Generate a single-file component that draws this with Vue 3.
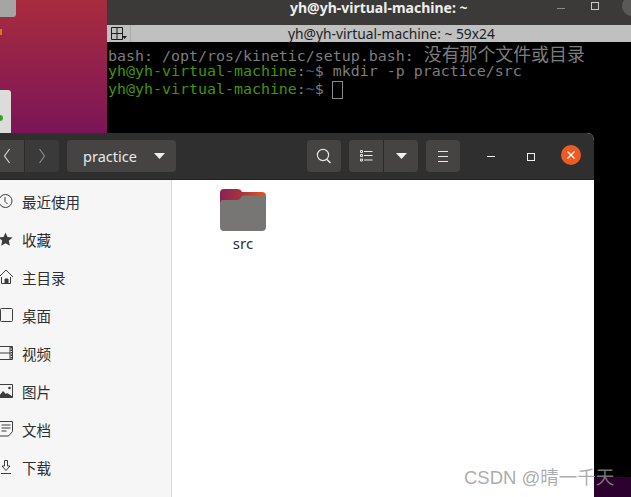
<script setup>
const places = [
  { name: '最近使用', icon: 'clock' },
  { name: '收藏', icon: 'star' },
  { name: '主目录', icon: 'home' },
  { name: '桌面', icon: 'desk' },
  { name: '视频', icon: 'film' },
  { name: '图片', icon: 'pic' },
  { name: '文档', icon: 'doc' },
  { name: '下载', icon: 'down' },
]
</script>

<template>
  <div class="desktop">
    <div class="desk-icon top"></div>
    <div class="desk-orange"></div>
    <div class="desk-icon doc-icon"><span class="green"></span></div>

    <section class="terminal">
      <header class="term-title">
        <span class="term-name">yh@yh-virtual-machine: ~</span>
        <svg class="term-ctl" width="60" height="16" viewBox="0 0 60 16">
          <path d="M6 8.5h8" stroke="#8a8a88" fill="none" />
          <rect x="40.5" y="2.5" width="7" height="7" stroke="#c8c8c6" fill="none" />
        </svg>
        <span class="term-close"></span>
      </header>
      <div class="term-bar">
        <div class="tab-btn">
          <svg width="17" height="14" viewBox="0 0 17 14">
            <path d="M.5.5h11v12H.5zM6 .5v12M.5 6.5h11" fill="none" stroke="#1c1c1c" />
            <path d="M11 9h5l-2.5 3z" fill="#1c1c1c" />
          </svg>
        </div>
        <span class="tab-label">yh@yh-virtual-machine: ~ 59x24</span>
      </div>
      <div class="term-body">
        <div class="line dim">bash: /opt/ros/kinetic/setup.bash: <span class="cjk">没有那个文件或目录</span></div>
        <div class="line"><span class="usr">yh@yh-virtual-machine</span><span class="dim">:</span><span class="path">~</span><span class="dim">$ mkdir -p practice/src</span></div>
        <div class="line"><span class="usr">yh@yh-virtual-machine</span><span class="dim">:</span><span class="path">~</span><span class="dim">$ </span><span class="cursor"></span></div>
      </div>
    </section>

    <section class="files">
      <header class="files-head">
        <div class="btn-group nav">
          <button class="btn nav-btn">
            <svg width="8" height="16" viewBox="0 0 8 16"><path d="M6.5 1 1.5 8l5 7" fill="none" stroke="#d4d4d2" stroke-width="1.2" /></svg>
          </button>
          <button class="btn nav-btn">
            <svg width="8" height="16" viewBox="0 0 8 16"><path d="M1.5 1l5 7-5 7" fill="none" stroke="#8a8a88" stroke-width="1.2" /></svg>
          </button>
        </div>
        <button class="btn path-btn">
          <span>practice</span>
          <svg width="11" height="6" viewBox="0 0 11 6"><path d="M0 0h11L5.5 6z" fill="#f0f0ee" /></svg>
        </button>
        <div class="spacer"></div>
        <button class="btn square">
          <svg width="16" height="17" viewBox="0 0 16 17"><circle cx="7" cy="7" r="5.6" fill="none" stroke="#e4e4e2" stroke-width="1.2" /><path d="M11 11.5l3.5 3.5" stroke="#e4e4e2" stroke-width="1.6" /></svg>
        </button>
        <div class="btn-group view">
          <button class="btn square">
            <svg width="13" height="12" viewBox="0 0 13 12"><path d="M.5.5h2v2h-2zM.5 4.5h2v2h-2zM.5 9h2v2h-2z" fill="none" stroke="#e8e8e6" /><path d="M4 1.5h8.5M4 5.5h8.5M4 10h8.5" stroke="#e8e8e6" fill="none" /></svg>
          </button>
          <button class="btn square">
            <svg width="11" height="6" viewBox="0 0 11 6"><path d="M0 0h11L5.5 6z" fill="#f0f0ee" /></svg>
          </button>
        </div>
        <button class="btn square">
          <svg width="12" height="11" viewBox="0 0 12 11"><path d="M1 .5h10M1 5.5h10M1 10.5h10" stroke="#e8e8e6" fill="none" /></svg>
        </button>
        <div class="win-ctl">
          <svg width="10" height="3" viewBox="0 0 10 3"><path d="M1 1.5h8" stroke="#f0f0ee" /></svg>
          <svg width="10" height="10" viewBox="0 0 10 10"><rect x="1.5" y="1.5" width="7" height="7" fill="none" stroke="#f0f0ee" /></svg>
          <span class="close">
            <svg width="8" height="8" viewBox="0 0 8 8"><path d="M.5.5l7 7M7.5.5l-7 7" stroke="#fff" stroke-width="1.2" /></svg>
          </span>
        </div>
      </header>
      <div class="files-main">
        <nav class="sidebar">
          <div v-for="p in places" :key="p.name" class="place">
            <svg class="place-icon" width="16" height="16" viewBox="0 0 16 16">
              <g v-if="p.icon === 'clock'" fill="none" stroke="#3d3d3d"><circle cx="8.5" cy="8" r="6.5" /><path d="M8 4v4.500l2.500 2.500" /></g>
              <path v-else-if="p.icon === 'star'" d="M8.500 1.500l2 4.500 5 .5-3.700 3.300 1 4.900-4.300-2.400-4.300 2.400 1-4.900L1.500 6.500l5-.5z" fill="#3d3d3d" />
              <g v-else-if="p.icon === 'home'" fill="none" stroke="#3d3d3d"><path d="M2 8l7-7 7 7M4.500 8v6.500h9V8" /><path d="M8 10h3v4.500H8z" fill="#3d3d3d" /></g>
              <rect v-else-if="p.icon === 'desk'" x="3.500" y="1.500" width="12" height="13" rx="1" fill="none" stroke="#3d3d3d" />
              <g v-else-if="p.icon === 'film'" fill="none" stroke="#3d3d3d"><path d="M1.500 1.500h14v13h-14zM3 8h10M13 1.500v13" /><path d="M14.500 2v12" stroke-width="2" stroke-dasharray="1.500 1" /></g>
              <g v-else-if="p.icon === 'pic'"><path d="M1.500 1.500h14v13h-14z" fill="none" stroke="#3d3d3d" /><path d="M2 13l4-5 3 3 1-1 5 3v1.500H2z" fill="#3d3d3d" /><circle cx="12.500" cy="5" r="1.300" fill="#3d3d3d" /></g>
              <g v-else-if="p.icon === 'doc'" fill="none" stroke="#3d3d3d"><path d="M2.500.5h13v10l-4 4.500h-9z" /><path d="M4.500 4h9M4.500 7h9M4.500 10h5" /></g>
              <g v-else fill="none" stroke="#3d3d3d"><path d="M7.500 1.500h3V7h2.500L9 11.500 5 7h2.500z" /><path d="M4 14.500h10" /></g>
            </svg>
            <span>{{ p.name }}</span>
          </div>
        </nav>
        <main class="content">
          <div class="folder-item">
            <svg width="46" height="43" viewBox="0 0 46 43">
              <defs>
                <linearGradient id="back" x1="0" y1="0" x2="1" y2="0">
                  <stop offset="0" stop-color="#8d1f56" />
                  <stop offset=".5" stop-color="#a83838" />
                  <stop offset="1" stop-color="#ea551e" />
                </linearGradient>
              </defs>
              <path d="M4 0h13c3 0 4 1 5 3h20a4 4 0 0 1 4 4v10H0V4a4 4 0 0 1 4-4z" fill="url(#back)" />
              <path d="M0 14a3 3 0 0 1 3-3h14c2 0 3-.8 4-2.500 .7-1.200 1.500-2 3-2h19a3 3 0 0 1 3 3V38a4 4 0 0 1-4 4H4a4 4 0 0 1-4-4z" fill="#777675" />
            </svg>
            <span class="folder-name">src</span>
          </div>
        </main>
      </div>
    </section>

    <div class="watermark">CSDN @晴一千天</div>
  </div>
</template>

<style>
html, body { margin: 0; background: #000; }
</style>

<style scoped>
.desktop {
  position: relative;
  width: 631px;
  height: 497px;
  overflow: hidden;
  background: linear-gradient(180deg, #a82c3e 0, #7b1558 133px, #4a0a45 300px, #2c002f 480px);
  font-family: "Noto Sans", "Noto Sans CJK SC", sans-serif;
}
.desk-icon { position: absolute; left: 0; background: #a5a5a3; }
.top { top: -4px; width: 16px; height: 21px; border-radius: 0 0 3px 0; }
.desk-orange { position: absolute; left: 0; top: 29px; width: 2px; height: 6px; background: #d4781c; }
.doc-icon { top: 90px; width: 11px; height: 43px; border-radius: 0 3px 0 0; background: #dcdcda; }
.green { position: absolute; left: -3px; top: 25px; width: 6px; height: 6px; border-radius: 50%; background: #3d9b2f; }

.terminal {
  position: absolute;
  left: 107px;
  top: 0;
  width: 524px;
  height: 477px;
  background: #000;
  display: flex;
  flex-direction: column;
}
.term-title {
  height: 25px;
  flex: none;
  background: #3b3a38;
  position: relative;
  display: flex;
  justify-content: flex-end;
  align-items: flex-start;
}
.term-name {
  position: absolute;
  left: 183px;
  top: 1px;
  font-size: 14px;
  font-weight: 700;
  line-height: 14px;
  color: #eeeeec;
  white-space: nowrap;
}
.term-ctl { margin: 0 20px 0 0; }
.term-close {
  position: absolute;
  right: -11px;
  top: -4px;
  width: 20px;
  height: 20px;
  border-radius: 50%;
  background: #5a5957;
}
.term-bar {
  height: 17px;
  flex: none;
  background: #c0c0c0;
  display: flex;
  align-items: center;
  position: relative;
}
.tab-btn {
  width: 24px;
  height: 17px;
  box-sizing: border-box;
  border-right: 1px solid #acacac;
  padding: 2px 0 0 4px;
  display: flex;
}
.tab-label {
  position: absolute;
  left: 181px;
  top: 0;
  font-size: 13.8px;
  line-height: 18px;
  color: #1e1e1e;
  white-space: nowrap;
}
.term-body {
  padding: 2px 0 0 1px;
  font-family: "DejaVu Sans Mono", "Noto Sans CJK SC", monospace;
  font-size: 14.95px;
  line-height: 18px;
}
.line { height: 18px; white-space: nowrap; }
.dim { color: #7d7d7d; }
.cjk { font-family: "Noto Sans CJK SC", sans-serif; font-size: 17.9px; margin-left: 1px; }
.usr { color: #449407; }
.path { color: #34598c; }
.cursor {
  display: inline-block;
  width: 11px;
  height: 18px;
  box-sizing: border-box;
  border: 1px solid #8a8a8a;
  vertical-align: -5px;
  margin-left: -1px;
}

.files {
  position: absolute;
  left: -24px;
  top: 133px;
  width: 618px;
  height: 380px;
  display: flex;
  flex-direction: column;
  border-radius: 7px 7px 0 0;
  overflow: hidden;
  background: #fff;
}
.files-head {
  height: 47px;
  flex: none;
  box-sizing: border-box;
  background: #302f2f;
  border-bottom: 1px solid #222;
  display: flex;
  align-items: flex-start;
  padding-top: 7px;
  gap: 8px;
}
.btn {
  height: 32px;
  border: 0;
  padding: 0;
  background: #454443;
  border-radius: 4px;
  display: flex;
  align-items: center;
  justify-content: center;
}
.btn-group { display: flex; }
.btn-group .btn { border-radius: 0; }
.btn-group .btn:first-child { border-radius: 4px 0 0 4px; }
.btn-group .btn:last-child { border-radius: 0 4px 4px 0; border-left: 1px solid #2a2a2a; }
.nav .nav-btn:first-child { width: 48px; padding-left: 14px; }
.nav .nav-btn:last-child { width: 35px; background: #3b3a3a; }
.path-btn {
  width: 109px;
  gap: 17px;
  color: #e6eaee;
  font-family: "Noto Sans", sans-serif;
  font-size: 14.5px;
  padding-left: 5px;
}
.spacer { width: 115px; }
.square { width: 34px; }
.view .square:last-child { width: 35px; }
.win-ctl {
  display: flex;
  align-items: center;
  height: 32px;
  margin-left: 18px;
  gap: 30px;
  padding-top: 1px;
  box-sizing: border-box;
}
.close {
  width: 20px;
  height: 20px;
  border-radius: 50%;
  background: #ee5a24;
  display: flex;
  align-items: center;
  justify-content: center;
  margin-top: -4px;
  margin-left: -5px;
}
.files-main { flex: 1; display: flex; min-height: 0; }
.sidebar {
  width: 196px;
  flex: none;
  box-sizing: border-box;
  background: #f6f6f6;
  border-right: 1px solid #d8d8d6;
  padding: 2px 0 0 21px;
}
.place {
  height: 38px;
  display: flex;
  align-items: center;
  gap: 9px;
  font-size: 14.5px;
  color: #2e2e2e;
}
.place-icon { flex: none; }
.content { flex: 1; padding: 9px 0 0 48px; }
.folder-item {
  width: 46px;
  display: flex;
  flex-direction: column;
  align-items: center;
  gap: 1px;
}
.folder-name { font-size: 15px; line-height: 20px; color: #2e2e2e; }

.watermark {
  position: absolute;
  left: 464px;
  top: 467px;
  font-family: "Liberation Sans", "Noto Sans CJK SC", sans-serif;
  font-size: 18.5px;
  line-height: 22px;
  white-space: nowrap;
  color: rgba(150, 150, 150, 0.8);
}
</style>
